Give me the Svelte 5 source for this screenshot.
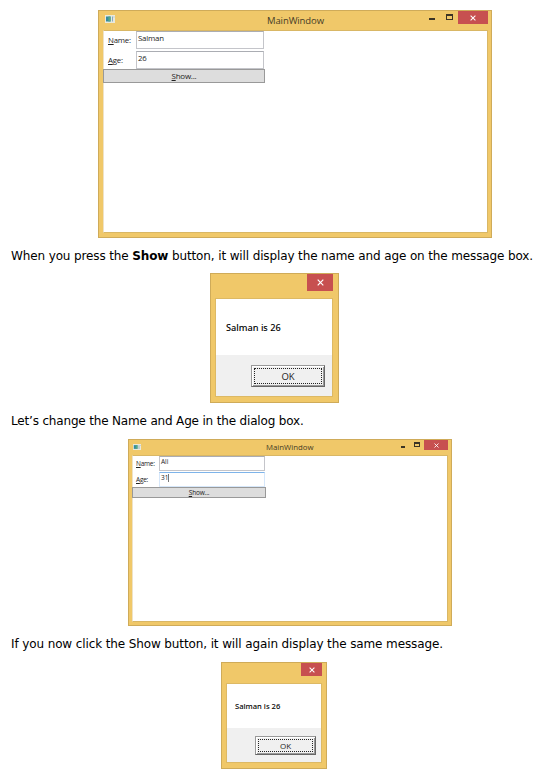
<script>
  const windows = {
    first: { size: 'large', name: 'Salman', age: '26', focused: false },
    second: { size: 'small', name: 'Ali', age: '31', focused: true }
  };
</script>

{#snippet cross()}
  <svg class="cross" viewBox="0 0 7 7"><path d="M.7.7l5.6 5.6M6.3.7L.7 6.3" /></svg>
{/snippet}

{#snippet mainWindow(w)}
  <section class="window {w.size}">
    <header>
      <svg class="app-icon" viewBox="0 0 10 8" preserveAspectRatio="none">
        <path d="M0 0h10v8H0z" fill="#e9e9dc" />
        <path d="M1 1.5h4.6v5H1z" fill="#348aa0" />
        <path d="M3.4 1.5h2.2v5H3.4z" fill="#54a886" />
        <path d="M7 1.5h1v5H7zM8.7 1.5h.6v1h-.6z" fill="#86a9c4" />
      </svg>
      <span class="title">MainWindow</span>
      <span class="minimize"></span>
      <span class="maximize"></span>
      <span class="close">{@render cross()}</span>
    </header>
    <div class="client">
      <div class="row">
        <span class="label"><u>N</u>ame:</span>
        <div class="input"><span>{w.name}</span></div>
      </div>
      <div class="row">
        <span class="label"><u>A</u>ge:</span>
        <div class="input" class:focused={w.focused}>
          <span>{w.age}</span>{#if w.focused}<i class="caret"></i>{/if}
        </div>
      </div>
      <div class="show"><span><u>S</u>how...</span></div>
    </div>
  </section>
{/snippet}

{#snippet dialog(size)}
  <section class="dialog {size}">
    <header><span class="close">{@render cross()}</span></header>
    <div class="box">
      <div class="message">Salman is 26</div>
      <footer><div class="ok"><span>OK</span></div></footer>
    </div>
  </section>
{/snippet}

<main>
  {@render mainWindow(windows.first)}
  <p class="p1">When you press the <b>Show</b> button, it will display the name and age on the message box.</p>
  {@render dialog('big')}
  <p class="p2">Let’s change the Name and Age in the dialog box.</p>
  {@render mainWindow(windows.second)}
  <p class="p3">If you now click the Show button, it will again display the same message.</p>
  {@render dialog('little')}
</main>

<style>
  :global(body) { background: #fff; }
  main {
    width: 544px; height: 774px; box-sizing: border-box; padding-top: 10px;
    display: flex; flex-direction: column; overflow: hidden;
  }
  main * { box-sizing: border-box; }
  p {
    margin: 0 0 0 11px; flex: none; white-space: nowrap; color: #000;
    font: 12px/36px "DejaVu Sans", Verdana, sans-serif;
  }
  .p1 { height: 35px; line-height: 36px; letter-spacing: -0.125px; }
  .p2 { height: 36px; line-height: 37px; letter-spacing: -0.17px; }
  .p3 { height: 36px; line-height: 37px; letter-spacing: -0.115px; }

  .window, .dialog {
    flex: none; display: flex; flex-direction: column; background: #f0c869;
    border: 1px solid #cfab59; font-family: "Open Sans", "Noto Sans", sans-serif; color: #222;
  }
  header { flex: none; display: flex; align-items: flex-start; }
  .close { background: #c75050; display: flex; align-items: center; justify-content: center; flex: none; }
  .cross { width: 6px; height: 6px; stroke: #fff; stroke-width: 1.2; fill: none; }

  .window header { display: grid; }
  .app-icon { display: block; width: 100%; }
  .title { white-space: nowrap; color: #453c27; }
  .minimize { background: #3b3425; height: 2px; }
  .maximize { border: 1px solid #3b3425; border-top-width: 2px; }
  .client { flex: 1; background: #fff; border: 1px solid #d9b765; border-left-color: #eee2c7; }
  .row { display: flex; }
  .label { flex: none; white-space: nowrap; }
  u { text-decoration-thickness: 1px; text-underline-offset: 1px; }
  .input { border: 1px solid #c4c5ca; border-top-color: #abadb3; display: flex; white-space: nowrap; }
  .focused { border-color: #d6e7fa; border-top-color: #7eb4ea; }
  .caret { width: 1px; height: 8px; background: #777; margin-top: 1px; }
  .show { background: #ddd; border: 1px solid #999; display: flex; justify-content: center; white-space: nowrap; }

  .large { width: 394px; height: 228px; margin-left: 98px; }
  .large header { height: 19px; grid-template-columns: 10px 152px 162px 17px 12px 30px; padding-left: 6px; }
  .large .app-icon { height: 8px; margin-top: 4px; }
  .large .title { grid-column: 3; font-size: 9.5px; line-height: 19px; letter-spacing: -0.1px; }
  .large .minimize { grid-column: 4; width: 6px; margin-top: 7px; }
  .large .maximize { grid-column: 5; width: 7px; height: 6px; margin-top: 3px; }
  .large .close { grid-column: 6; height: 13px; }
  .large .client { margin: 0 3px 4px 4px; }
  .large .row { height: 19.5px; font-size: 7.8px; }
  .large .label { width: 32px; padding-left: 4px; line-height: 19px; letter-spacing: -0.2px; }
  .large .input { width: 128px; height: 18px; line-height: 13px; padding-left: 1px; letter-spacing: -0.2px; }
  .large .show { width: 162px; height: 14px; margin-left: -1px; margin-top: -1px; font-size: 8px; line-height: 12px; letter-spacing: -0.25px; }

  .small { width: 324px; height: 187px; margin-left: 128px; }
  .small header { height: 15px; grid-template-columns: 8px 125px 135px 13px 10px 24px; padding-left: 4px; }
  .small .app-icon { height: 6px; margin-top: 4px; }
  .small .title { grid-column: 3; font-size: 7.8px; line-height: 15px; }
  .small .minimize { grid-column: 4; width: 4px; margin-top: 6px; }
  .small .maximize { grid-column: 5; width: 6px; height: 5px; margin-top: 2px; }
  .small .close { grid-column: 6; height: 10px; }
  .small .cross { width: 5px; height: 5px; }
  .small .client { margin: 0 3px 3px; }
  .small .row { height: 16px; font-size: 6.5px; }
  .small .label { width: 26px; padding-left: 3px; line-height: 16px; letter-spacing: -0.25px; }
  .small .input { width: 106px; height: 15px; line-height: 10px; padding-left: 1px; }
  .small .show { width: 134px; height: 11px; margin-left: -1px; margin-top: -1px; font-size: 6.5px; line-height: 10px; letter-spacing: -0.15px; }

  .dialog header { justify-content: flex-end; }
  .box { flex: 1; display: flex; flex-direction: column; background: #fff; border: 1px solid #ddb964; }
  .message { flex: 1; display: flex; align-items: center; color: #000; white-space: nowrap; font-family: "Noto Sans", sans-serif; font-weight: 500; }
  footer { flex: none; background: #f0f0f0; display: flex; justify-content: flex-end; }
  .ok {
    display: flex; padding: 2px; background: #f0f0f0; border: 1px solid #999;
    border-right-color: #666; border-bottom-color: #666;
    box-shadow: inset 1px 1px #fff, inset -1px -1px #999;
  }
  .ok span { flex: 1; display: flex; align-items: center; justify-content: center; border: 1px dotted #222; }

  .big { width: 129px; height: 130px; margin-left: 210px; }
  .big header { height: 24px; padding-right: 5px; }
  .big .close { width: 26px; height: 17px; }
  .big .cross { width: 7px; height: 7px; }
  .big .box { margin: 0 5px 5px 4px; }
  .big .message { padding-left: 10px; font-size: 9.2px; }
  .big footer { height: 41px; padding: 10px 7px 0 0; }
  .big .ok { width: 74px; height: 22px; font-size: 9.5px; }

  .little { width: 106px; height: 107px; margin-left: 221px; }
  .little header { height: 20px; padding-right: 4px; }
  .little .close { width: 21px; height: 13px; }
  .little .box { margin: 0 4px 5px; }
  .little .message { padding-left: 8px; font-size: 7.6px; }
  .little footer { height: 34px; padding: 8px 5px 0 0; }
  .little .ok { width: 61px; height: 19px; font-size: 8px; }
</style>
